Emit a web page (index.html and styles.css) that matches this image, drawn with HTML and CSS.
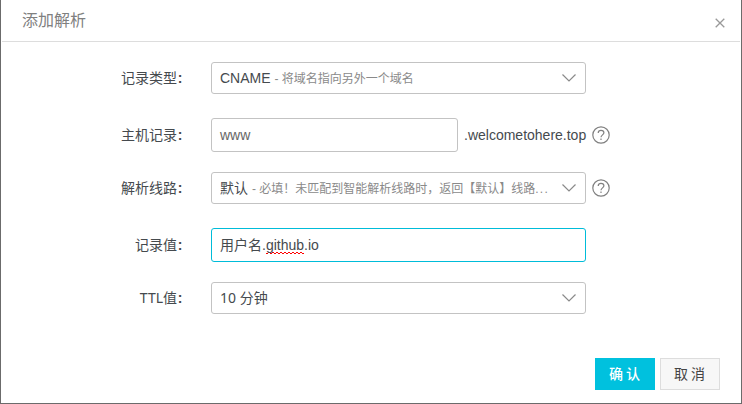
FILE: index.html
```html
<!DOCTYPE html>
<html lang="zh-CN">
<head>
<meta charset="utf-8">
<title>添加解析</title>
<link rel="stylesheet" href="styles.css">
</head>
<body>
<div class="dialog">
  <header class="header">
    <h1 class="title">添加解析</h1>
    <svg class="close" width="10" height="10" viewBox="0 0 10 10"><path d="M.7.7 9.3 9.3M9.3.7.7 9.3"/></svg>
  </header>
  <main class="form">
    <div class="row select-row">
      <label class="label">记录类型<span class="colon">:</span></label>
      <div class="control select"><span class="value">CNAME <span class="hint">- 将域名指向另外一个域名</span></span><svg class="arrow" width="14" height="8" viewBox="0 0 14 8"><path d="M.5.5 7 7 13.5.5"/></svg></div>
    </div>
    <div class="row">
      <label class="label">主机记录<span class="colon">:</span></label>
      <div class="control input short"><span class="value host">www</span></div>
      <span class="suffix">.welcometohere.top</span>
      <svg class="help" width="18" height="18" viewBox="0 0 18 18"><circle cx="9" cy="9" r="8.2"/><path d="M6.2 7C6.2 5.300 7.300 4.300 9 4.300s2.900 1 2.900 2.500C11.900 8.800 9 9 9 11.300M9 12.500v1.500"/></svg>
    </div>
    <div class="row select-row">
      <label class="label">解析线路<span class="colon">:</span></label>
      <div class="control select"><span class="value">默认 <span class="hint">- 必填！未匹配到智能解析线路时，返回【默认】线路<span class="dots">...</span></span></span><svg class="arrow" width="14" height="8" viewBox="0 0 14 8"><path d="M.5.5 7 7 13.5.5"/></svg></div>
      <svg class="help" width="18" height="18" viewBox="0 0 18 18"><circle cx="9" cy="9" r="8.2"/><path d="M6.2 7C6.2 5.300 7.300 4.300 9 4.300s2.900 1 2.900 2.500C11.900 8.800 9 9 9 11.300M9 12.500v1.500"/></svg>
    </div>
    <div class="row">
      <label class="label">记录值<span class="colon">:</span></label>
      <div class="control input focus"><span class="value">用户名.<span class="misspelt">github</span>.io</span></div>
    </div>
    <div class="row select-row">
      <label class="label ttl">TTL值<span class="colon">:</span></label>
      <div class="control select"><span class="value minutes">10 分钟</span><svg class="arrow" width="14" height="8" viewBox="0 0 14 8"><path d="M.5.5 7 7 13.5.5"/></svg></div>
    </div>
  </main>
  <footer class="footer">
    <button class="button primary">确 认</button>
    <button class="button">取 消</button>
  </footer>
</div>
</body>
</html>
```
FILE: styles.css
```css
* { box-sizing: border-box; }
body {
  margin: 0;
  color: #454a4e;
  font: 14px/20px "Liberation Sans", "Noto Sans CJK SC", sans-serif;
}
.dialog {
  display: flex;
  flex-direction: column;
  width: 742px;
  height: 404px;
  border: 1px solid #6b6b6b;
  border-top: 0;
  background: #fff;
}
.header {
  display: flex;
  justify-content: space-between;
  height: 42px;
  margin: 0 1px;
  padding: 0 15px 0 20px;
  border-bottom: 1px solid #ddd;
}
.title {
  margin: 0;
  color: #808080;
  font-size: 16px;
  font-weight: 400;
  line-height: 41px;
}
svg { fill: none; stroke: #808080; flex: none; }
.close { margin-top: 18px; stroke: #999; stroke-width: 1.3; }
.form {
  display: flex;
  flex-direction: column;
  gap: 20px;
  padding-top: 20px;
}
.row { display: flex; align-items: center; height: 34px; }
.select-row { height: 32px; margin-bottom: 4px; }
.label { width: 183px; margin-right: 27px; text-align: right; }
.colon {
  display: inline-block;
  width: 7px;
  padding-right: 1px;
  font-family: "Liberation Sans", sans-serif;
  font-weight: 700;
  text-align: center;
}
.ttl { font-family: "Noto Sans", "Noto Sans CJK SC", sans-serif; font-weight: 400; }
.control {
  display: flex;
  align-items: center;
  justify-content: space-between;
  width: 375px;
  height: 34px;
  padding: 0 9px 0 8px;
  border: 1px solid #c3c3c3;
  border-radius: 3px;
  white-space: nowrap;
}
.select { height: 32px; }
.short { width: 247px; }
.focus { border-color: #00bcd9; }
.host { color: #666; }
.minutes { font-family: "Noto Sans", "Noto Sans CJK SC", sans-serif; }
.hint { color: #8a8a8a; font-size: 12px; }
.dots { letter-spacing: 1.3px; }
.misspelt {
  padding-bottom: 1px;
  background:
    linear-gradient(90deg, #f00 50%, transparent 50%) 0 100% / 4px 1px repeat-x,
    linear-gradient(90deg, #f00 50%, transparent 50%) 2px calc(100% - 1px) / 4px 1px repeat-x;
}
.suffix { width: 122px; margin-left: 6px; white-space: nowrap; }
.help { margin-left: 6px; stroke-width: 1.2; }
.arrow { stroke: #8a8a8a; stroke-width: 1.2; }
.footer {
  display: flex;
  justify-content: flex-end;
  gap: 5px;
  margin-top: auto;
  padding: 0 21px 13px 0;
}
.button {
  width: 60px;
  height: 32px;
  padding: 0 1px 2px 0;
  border: 1px solid #ddd;
  background: #f7f7f7;
  color: #444;
  font: 14px/20px "Noto Sans CJK SC", sans-serif;
}
.primary { border-color: #00c1de; background: #00c1de; color: #fff; font-weight: 500; }
```
